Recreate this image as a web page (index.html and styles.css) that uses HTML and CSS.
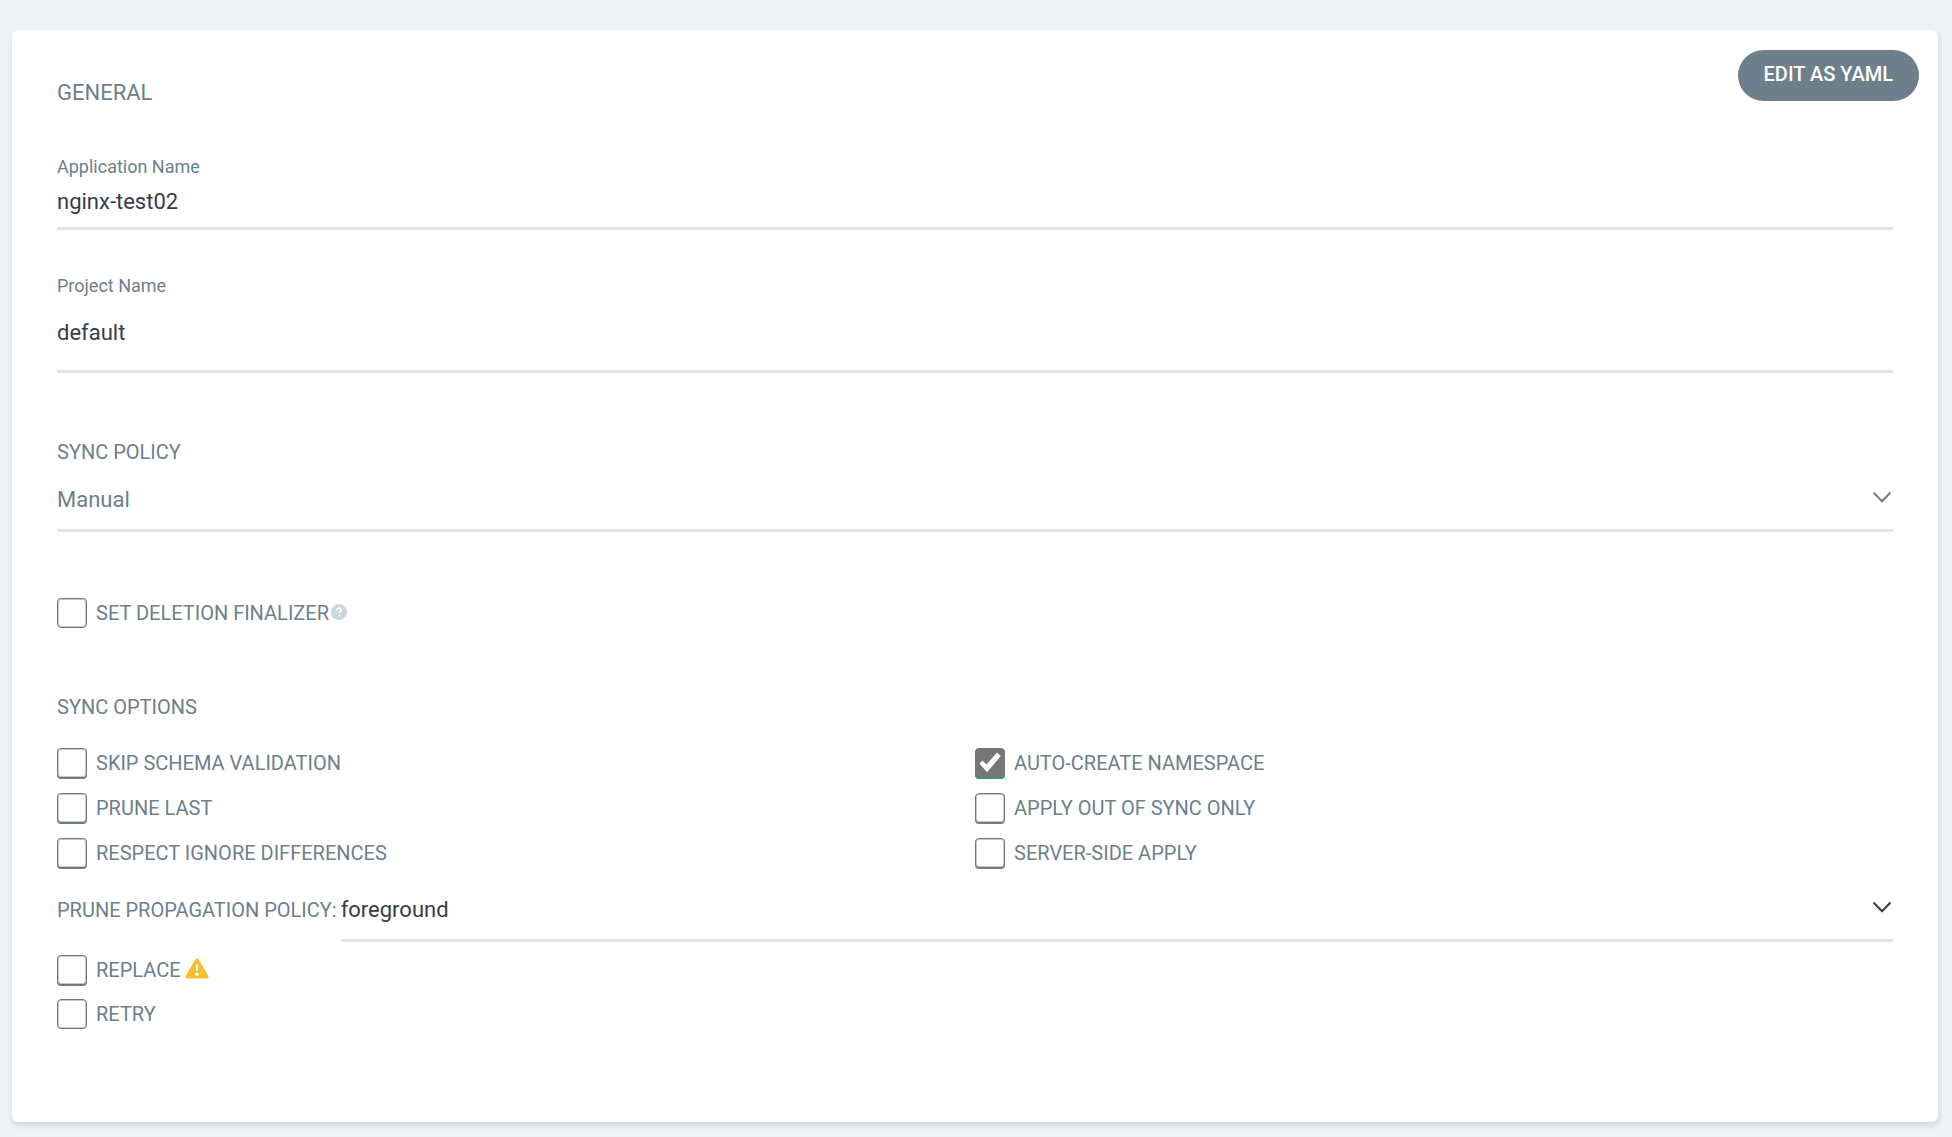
FILE: index.html
```html
<!DOCTYPE html>
<html lang="en">
<head>
    <meta charset="UTF-8">
    <meta name="viewport" content="width=device-width, initial-scale=1.0">
    <title>New Application</title>
    <link rel="stylesheet" href="styles.css">
</head>
<body>
    <form class="panel">
        <div class="panel-header">
            <h1>GENERAL</h1>
            <button type="button" class="yaml-btn">EDIT AS YAML</button>
        </div>

        <div class="panel-body">
            <div class="field">
                <label for="app-name">Application Name</label>
                <input type="text" id="app-name" value="nginx-test02">
            </div>

            <div class="field project">
                <label for="project">Project Name</label>
                <input type="text" id="project" value="default">
            </div>

            <div class="policy">
                <label class="caption" for="sync-policy">SYNC POLICY</label>
                <div class="select muted">
                    <select id="sync-policy">
                        <option>Manual</option>
                        <option>Automatic</option>
                    </select>
                    <svg viewBox="0 0 20 12"><path d="M1.5 1.5 10 10.2 18.5 1.5"/></svg>
                </div>
            </div>

            <div class="check finalizer">
                <input type="checkbox" id="finalizer">
                <label for="finalizer">SET DELETION FINALIZER</label>
                <svg class="help" viewBox="0 0 16 16">
                    <circle cx="8" cy="8" r="8"/>
                    <path d="M5.9 6.2C6 4.9 6.9 4.2 8.1 4.2c1.2 0 2.1.7 2.1 1.8 0 1.4-1.9 1.5-1.9 3"/>
                    <path d="M8.2 10.6v1.7"/>
                </svg>
            </div>

            <h2 class="caption">SYNC OPTIONS</h2>
            <div class="options">
                <div class="check">
                    <input type="checkbox" id="skip-schema">
                    <label for="skip-schema">SKIP SCHEMA VALIDATION</label>
                </div>
                <div class="check">
                    <input type="checkbox" id="auto-create" checked>
                    <svg class="tick" viewBox="0 0 30 30"><path d="M4.5 15.5 7.5 12.5 11.5 16.5 22 4.5 25.8 8 12 24.3z"/></svg>
                    <label for="auto-create">AUTO-CREATE NAMESPACE</label>
                </div>
                <div class="check">
                    <input type="checkbox" id="prune-last">
                    <label for="prune-last">PRUNE LAST</label>
                </div>
                <div class="check">
                    <input type="checkbox" id="out-of-sync">
                    <label for="out-of-sync">APPLY OUT OF SYNC ONLY</label>
                </div>
                <div class="check">
                    <input type="checkbox" id="ignore-diff">
                    <label for="ignore-diff">RESPECT IGNORE DIFFERENCES</label>
                </div>
                <div class="check">
                    <input type="checkbox" id="server-side">
                    <label for="server-side">SERVER-SIDE APPLY</label>
                </div>
            </div>

            <div class="propagation">
                <label for="propagation">PRUNE PROPAGATION POLICY:</label>
                <div class="select">
                    <select id="propagation">
                        <option>foreground</option>
                        <option>background</option>
                        <option>orphan</option>
                    </select>
                    <svg viewBox="0 0 20 12"><path d="M1.5 1.5 10 10.2 18.5 1.5"/></svg>
                </div>
            </div>

            <div class="check replace">
                <input type="checkbox" id="replace">
                <label for="replace">REPLACE</label>
                <svg class="warning" viewBox="0 0 24 21">
                    <path d="M10.4 1.3a1.9 1.9 0 0 1 3.2 0l9.7 16.5a1.8 1.8 0 0 1-1.6 2.7H2.3a1.8 1.8 0 0 1-1.6-2.7z"/>
                    <path class="mark" d="M10.8 6.5h2.4l-.4 6.6h-1.6z"/>
                    <circle class="mark" cx="12" cy="16.2" r="1.7"/>
                </svg>
            </div>
            <div class="check retry">
                <input type="checkbox" id="retry">
                <label for="retry">RETRY</label>
            </div>
        </div>
    </form>
</body>
</html>
```

FILE: styles.css
```css
*{
    margin: 0;
    padding: 0;
    box-sizing: border-box;
}

body{
    padding: 30px 14px 15px 12px;
    background-color: #eef2f5;
    font-family: Roboto, sans-serif;
    font-size: 20px;
    line-height: 24px;
    color: #6d7f8b;
}

.panel{
    background-color: #fff;
    border-radius: 6px;
    box-shadow: 1px 3px 6px rgba(0, 0, 0, 0.12);
}

.panel-header{
    display: flex;
    justify-content: space-between;
    align-items: flex-start;
    padding: 20px 19px 0 45px;

    h1{
        margin-top: 29px;
        font-size: 22px;
        font-weight: 400;
        line-height: 28px;
    }
}

.yaml-btn{
    padding: 12px 26px 15px;
    border: none;
    border-radius: 26px;
    background-color: #6d7f8b;
    color: #fff;
    font: 500 20px/24px Roboto, sans-serif;
    cursor: pointer;
}

.panel-body{
    padding: 48px 45px 93px;
}

.field{
    display: flex;
    flex-direction: column;

    label{
        font-size: 18px;
    }

    input{
        padding: 9px 0 11px;
        border: none;
        border-bottom: 3px solid #dee6eb;
        outline: none;
        font: 22px/28px Roboto, sans-serif;
        color: #363c4a;
    }
}

.project{
    margin-top: 44px;

    input{
        padding: 21px 0 23px;
    }
}

.caption{
    display: block;
    font-size: 20px;
    font-weight: 400;
}

.select{
    position: relative;
    flex: 1;
    color: #363c4a;

    select{
        display: block;
        width: 100%;
        padding: 1px 0 15px;
        appearance: none;
        border: none;
        border-bottom: 3px solid #dee6eb;
        border-radius: 0;
        outline: none;
        background: none;
        font: 22px/28px Roboto, sans-serif;
        color: inherit;
    }

    svg{
        position: absolute;
        right: 1px;
        bottom: 29px;
        width: 20px;
        height: 12px;
        fill: none;
        stroke: currentColor;
        stroke-width: 2;
        pointer-events: none;
    }
}

.policy{
    margin-top: 67px;

    select{
        padding-top: 22px;
    }
}

.muted{
    color: #6d7f8b;
}

.check{
    display: flex;
    align-items: center;
    position: relative;

    input{
        width: 30px;
        height: 30px;
        margin-right: 9px;
        appearance: none;
        border: 1px solid #767676;
        border-radius: 4px;
        background-color: #fff;
        box-shadow: inset 0 0 0 1px #c8c8c8;
    }

    input:checked{
        background-color: #767676;
        box-shadow: 0 1px 0 #00a2b3;
    }
}

.tick{
    position: absolute;
    left: 0;
    width: 30px;
    height: 30px;
    fill: #fff;
    pointer-events: none;
}

.finalizer{
    margin: 66px 0 67px;
}

.help{
    width: 16px;
    height: 16px;
    margin: 0 0 2px 2px;
    fill: #ccd6dd;

    path{
        fill: none;
        stroke: #fff;
        stroke-width: 2;
    }
}

.options{
    display: grid;
    grid-template-columns: 1fr 1fr;
    row-gap: 15px;
    margin-top: 29px;
}

.options input:not(:checked), .replace input{
    box-shadow: inset 0 0 0 1px #c8c8c8, 0 1px 0 #6d7f8b;
}

.propagation{
    display: flex;
    gap: 4px;
    margin: 27px 0 13px;

    label{
        padding-top: 3px;
    }
}

.warning{
    width: 24px;
    height: 21px;
    margin: 0 0 3px 4px;
    fill: #f4c030;

    .mark{
        fill: #fff;
    }
}

.retry{
    margin-top: 14px;
}
```
